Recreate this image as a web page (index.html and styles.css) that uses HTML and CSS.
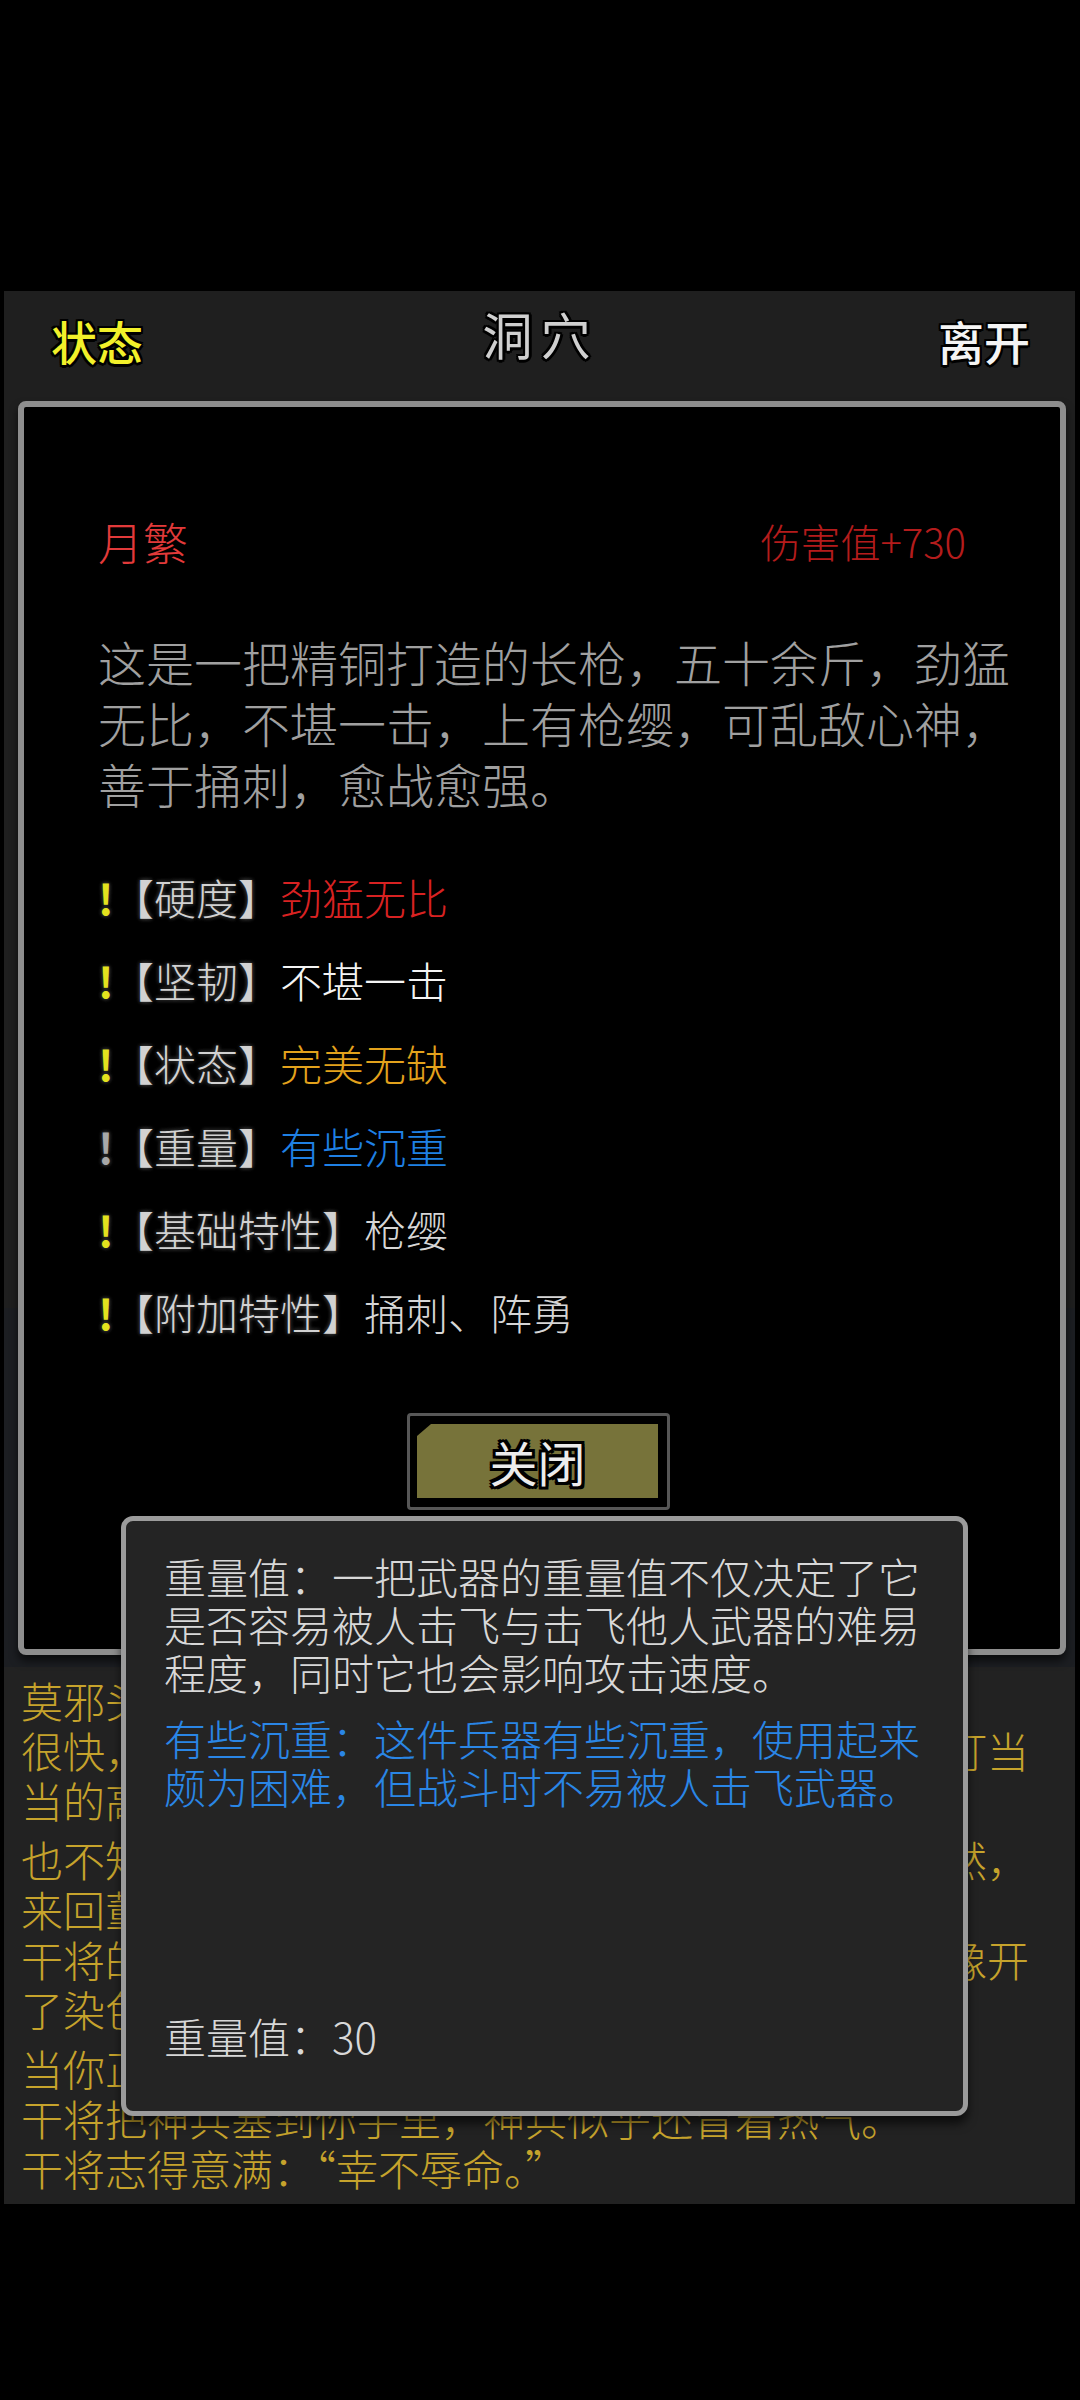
FILE: index.html
```html
<!DOCTYPE html>
<html>
<head>
    <meta charset="UTF-8" />
    <meta name="viewport" content="width=device-width, initial-scale=1.0" />
    <title>洞穴</title>
    <link rel="stylesheet" href="styles.css">
</head>
<body>
    <div id="screen">
        <div id="stage">
            <div id="topbar">
                <span class="tab tab-status">状态</span>
                <span class="place">洞穴</span>
                <span class="tab tab-leave">离开</span>
            </div>
        </div>
        <div id="middle"></div>
        <div id="log">
            <p>莫邪头也不抬，将一块块精铜投入炉中。</p>
            <p>很快，炉火便烧得通红，干将挥锤敲打，只听得叮叮当当的高亢声响在洞中回荡。</p>
            <p class="gap">也不知过了多久，炉中铜水渐渐凝成枪形，寒光凛然，来回董视的火舌映在石壁上。</p>
            <p>干将的锤子越落越快，火星四处飞溅，整个洞穴好像开了染色坊，五彩斑斓。</p>
            <p class="gap">当你正看得出神时，锤声戛然而止。</p>
            <p>干将把神兵塞到你手里，神兵似乎还冒着热气。</p>
            <p>干将志得意满：“幸不辱命。”</p>
        </div>
    </div>

    <div id="item">
        <div class="item-head">
            <span class="item-name">月繁</span>
            <span class="item-damage">伤害值+730</span>
        </div>
        <p class="item-desc">这是一把精铜打造的长枪，五十余斤，劲猛无比，不堪一击，上有枪缨，可乱敌心神，善于捅刺，愈战愈强。</p>
        <div class="attrs">
            <div class="attr"><span class="mark">!</span><span class="label">【硬度】</span><span class="val red">劲猛无比</span></div>
            <div class="attr"><span class="mark">!</span><span class="label">【坚韧】</span><span class="val white">不堪一击</span></div>
            <div class="attr"><span class="mark">!</span><span class="label">【状态】</span><span class="val orange">完美无缺</span></div>
            <div class="attr"><span class="mark off">!</span><span class="label">【重量】</span><span class="val blue">有些沉重</span></div>
            <div class="attr"><span class="mark">!</span><span class="label">【基础特性】</span><span class="val gray">枪缨</span></div>
            <div class="attr"><span class="mark">!</span><span class="label">【附加特性】</span><span class="val gray">捅刺、阵勇</span></div>
        </div>
        <div class="close-wrap">
            <div class="close-btn"><span class="close-face">关闭</span></div>
        </div>
    </div>

    <div id="tip">
        <p class="tip-text">重量值：一把武器的重量值不仅决定了它是否容易被人击飞与击飞他人武器的难易程度，同时它也会影响攻击速度。</p>
        <p class="tip-note">有些沉重：这件兵器有些沉重，使用起来颇为困难，但战斗时不易被人击飞武器。</p>
        <p class="tip-value">重量值：30</p>
    </div>
</body>
</html>
```

FILE: styles.css
```css
* {
    box-sizing: border-box;
}

body {
    position: relative;
    margin: 0;
    width: 1080px;
    min-height: 2400px;
    background: #000;
    font-family: "Noto Sans CJK SC", "Noto Sans", sans-serif;
}

p {
    margin: 0;
}

#screen {
    padding: 291px 5px 0 4px;
}

#stage {
    height: 1017px;
    background: #1f1f1f;
}

#topbar {
    display: flex;
    justify-content: space-between;
    align-items: center;
    height: 98px;
    padding: 0 45px 0 47px;
}

.tab {
    font-size: 46px;
    font-weight: 500;
    line-height: 1;
    text-shadow: -2px -2px 0 #000, 2px -2px 0 #000, -2px 2px 0 #000, 2px 2px 0 #000,
        0 3px 0 #000, 0 -2px 0 #000, 2px 0 0 #000, -2px 0 0 #000;
}

.tab-status {
    color: #f2f02a;
}

.tab-leave {
    color: #f4f4f4;
}

.place {
    margin-bottom: 14px;
    font-size: 50px;
    line-height: 1;
    letter-spacing: 8px;
    color: #cfcfcf;
    text-shadow: -2px -2px 0 #000, 2px -2px 0 #000, -2px 2px 0 #000, 2px 2px 0 #000,
        0 3px 0 #000, 0 -2px 0 #000, 3px 0 0 #000, -2px 0 0 #000;
}

#middle {
    height: 359px;
    background: #1c1e22;
}

#log {
    padding: 8px 30px 11px 17px;
    background: #222;
    font-size: 42px;
    font-weight: 300;
    line-height: 50px;
    color: #c6a32c;
}

#log .gap {
    margin-top: 9px;
}

/* item detail card */
#item {
    position: absolute;
    left: 18px;
    top: 401px;
    width: 1048px;
    height: 1254px;
    padding: 104px 40px 0 74px;
    border: 6px solid #8e8e8e;
    border-radius: 8px;
    background: #000;
    box-shadow: 0 6px 8px rgba(0, 0, 0, 0.6);
}

.item-head {
    display: flex;
    justify-content: space-between;
    align-items: center;
    height: 60px;
    margin-right: 54px;
}

.item-name {
    font-size: 45px;
    font-weight: 300;
    color: #e23a3a;
}

.item-damage {
    font-size: 40px;
    font-weight: 300;
    color: #b41c1c;
}

.item-desc {
    margin-top: 60px;
    font-size: 48px;
    font-weight: 300;
    line-height: 61px;
    color: #a0a0a0;
}

.attrs {
    margin-top: 41px;
}

.attr {
    display: flex;
    align-items: center;
    height: 83px;
    font-size: 42px;
    font-weight: 300;
}

.mark {
    display: inline-block;
    width: 14px;
    text-align: center;
    font-weight: 700;
    color: #e4e21e;
    text-shadow: 0 0 4px #3a3a3a, 0 0 4px #3a3a3a;
}

.mark.off {
    color: #a8a8a8;
}

.label {
    color: #d2d2d2;
    text-shadow: 0 0 4px #3a3a3a, 0 0 4px #3a3a3a;
}

.red {
    color: #d82222;
}

.white {
    color: #f4f4f4;
}

.orange {
    color: #e3a21c;
}

.blue {
    color: #1f80e4;
}

.gray {
    color: #d6d6d6;
}

.close-wrap {
    display: flex;
    justify-content: center;
    margin: 60px -40px 0 -74px;
    padding-right: 7px;
}

.close-btn {
    width: 263px;
    height: 97px;
    padding: 8px 9px 9px 7px;
    border: 3px solid #575757;
    border-radius: 4px;
    background: #000;
}

.close-face {
    display: flex;
    justify-content: center;
    align-items: center;
    height: 100%;
    background: #77733a;
    clip-path: polygon(14px 0, 100% 0, 100% 100%, 0 100%, 0 12px);
    font-size: 48px;
    color: #ececec;
    text-shadow: -3px -3px 0 #000, 3px -3px 0 #000, -3px 3px 0 #000, 3px 3px 0 #000,
        0 3px 0 #000, 0 -3px 0 #000, 3px 0 0 #000, -3px 0 0 #000;
}

/* tooltip */
#tip {
    position: absolute;
    left: 121px;
    top: 1516px;
    display: flex;
    flex-direction: column;
    width: 847px;
    height: 600px;
    padding: 31px 38px 51px 38px;
    border: 5px solid #9b9b9b;
    border-radius: 12px;
    background: #242424;
    box-shadow: 0 8px 10px rgba(0, 0, 0, 0.6);
    font-size: 42px;
    font-weight: 300;
    line-height: 48px;
}

.tip-text {
    color: #d8d8d8;
}

.tip-note {
    margin-top: 18px;
    color: #2a86e6;
}

.tip-value {
    margin-top: auto;
    color: #d8d8d8;
}
```
